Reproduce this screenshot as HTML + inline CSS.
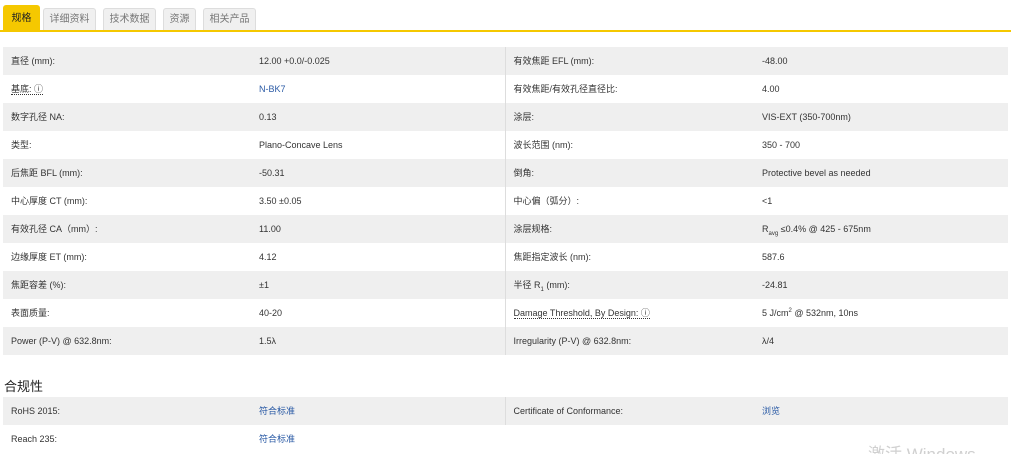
<!DOCTYPE html>
<html><head><meta charset="utf-8"><style>
*{margin:0;padding:0;box-sizing:border-box}
html,body{width:1011px;height:454px;overflow:hidden}
body{background:#fff;font-family:"Liberation Sans","Noto Sans CJK SC",sans-serif;color:#333;font-size:9px;position:relative}
.tabs{position:absolute;left:0;top:0;width:1011px;height:32px;border-bottom:2px solid #f5c800}
.tab{position:absolute;top:8px;height:22px;background:#f0f0f0;border:1px solid #ddd;border-bottom:none;border-radius:3px 3px 0 0;color:#777;font-size:10px;line-height:21px;text-align:center}
.tab.on{top:5px;height:25px;background:#f5c800;border-color:#f5c800;color:#222;line-height:26px}
table{position:absolute;left:3px;width:1005px;border-collapse:collapse}
td{height:28px;padding:0;vertical-align:middle;white-space:nowrap;line-height:12px}
tr:nth-child(odd) td{background:#efefef}
td.a{width:248px;padding-left:8px}
td.b{width:254px;padding-left:8px}
td.c{width:249px;padding-left:8px;border-left:1px solid #ddd}
td.d{padding-left:8px}
.l{color:#2a5aa5}
.u{border-bottom:1px dotted #333}
sub,sup{font-size:6px;line-height:0}
h3{position:absolute;left:4px;top:376px;font-size:13px;font-weight:normal;color:#222}
.wm{position:absolute;left:868px;top:445px;font-size:17px;color:#d0d0d0;line-height:20px}
</style></head><body>
<div class="tabs">
<div class="tab on" style="left:3px;width:37px">规格</div>
<div class="tab" style="left:43px;width:53px">详细资料</div>
<div class="tab" style="left:103px;width:53px">技术数据</div>
<div class="tab" style="left:163px;width:33px">资源</div>
<div class="tab" style="left:203px;width:53px">相关产品</div>
</div>
<table style="top:47px">
<tr><td class="a">直径 (mm):</td><td class="b">12.00 +0.0/-0.025</td><td class="c">有效焦距 EFL (mm):</td><td class="d">-48.00</td></tr>
<tr><td class="a"><span class="u">基底: ⓘ</span></td><td class="b l">N-BK7</td><td class="c">有效焦距/有效孔径直径比:</td><td class="d">4.00</td></tr>
<tr><td class="a">数字孔径 NA:</td><td class="b">0.13</td><td class="c">涂层:</td><td class="d">VIS-EXT (350-700nm)</td></tr>
<tr><td class="a">类型:</td><td class="b">Plano-Concave Lens</td><td class="c">波长范围 (nm):</td><td class="d">350 - 700</td></tr>
<tr><td class="a">后焦距 BFL (mm):</td><td class="b">-50.31</td><td class="c">倒角:</td><td class="d">Protective bevel as needed</td></tr>
<tr><td class="a">中心厚度 CT (mm):</td><td class="b">3.50 ±0.05</td><td class="c">中心偏（弧分）:</td><td class="d">&lt;1</td></tr>
<tr><td class="a">有效孔径 CA（mm）:</td><td class="b">11.00</td><td class="c">涂层规格:</td><td class="d">R<sub>avg</sub> ≤0.4% @ 425 - 675nm</td></tr>
<tr><td class="a">边缘厚度 ET (mm):</td><td class="b">4.12</td><td class="c">焦距指定波长 (nm):</td><td class="d">587.6</td></tr>
<tr><td class="a">焦距容差 (%):</td><td class="b">±1</td><td class="c">半径 R<sub>1</sub> (mm):</td><td class="d">-24.81</td></tr>
<tr><td class="a">表面质量:</td><td class="b">40-20</td><td class="c"><span class="u">Damage Threshold, By Design: ⓘ</span></td><td class="d">5 J/cm<sup>2</sup> @ 532nm, 10ns</td></tr>
<tr><td class="a">Power (P-V) @ 632.8nm:</td><td class="b">1.5λ</td><td class="c">Irregularity (P-V) @ 632.8nm:</td><td class="d">λ/4</td></tr>
</table>
<h3>合规性</h3>
<table style="top:397px">
<tr><td class="a">RoHS 2015:</td><td class="b l">符合标准</td><td class="c">Certificate of Conformance:</td><td class="d l">浏览</td></tr>
<tr><td class="a">Reach 235:</td><td class="b l">符合标准</td><td class="c" style="border-left:none"></td><td class="d"></td></tr>
</table>
<div class="wm">激活 Windows</div>
</body></html>
